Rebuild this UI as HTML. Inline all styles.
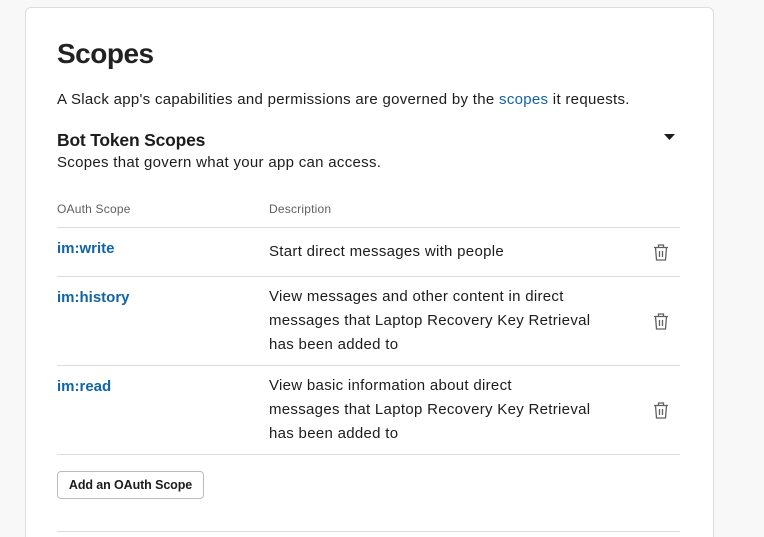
<!DOCTYPE html>
<html><head><style>
html,body{margin:0;width:764px;height:537px;overflow:hidden}
body{background:#f8f8f8;font-family:"Liberation Sans",sans-serif;color:#1d1c1d;position:relative}
.card{position:absolute;left:25px;top:7px;width:687px;height:529px;background:#fff;border:1px solid #ddd;border-bottom:none;border-radius:6px 6px 0 0}
.a{position:absolute;white-space:nowrap}
.line{position:absolute;left:57px;width:623px;height:1px;background:#ddd}
.scope{color:#1264a3;font-weight:bold;font-size:15px}
.desc{font-size:15px;line-height:24px;letter-spacing:0.3px}
.trash{position:absolute;left:653px}
</style></head><body>
<div class="card"></div>
<div class="a" style="left:57px;top:38px;font-size:28px;font-weight:bold;letter-spacing:-0.5px;color:#222">Scopes</div>
<div class="a" style="left:57px;top:91px;font-size:15px;letter-spacing:0.3px">A Slack app's capabilities and permissions are governed by the <span style="color:#1264a3">scopes</span> it requests.</div>
<div class="a" style="left:57px;top:130px;font-size:17.5px;font-weight:bold;letter-spacing:-0.2px">Bot Token Scopes</div>
<div class="a" style="left:57px;top:154px;font-size:15px;letter-spacing:0.3px">Scopes that govern what your app can access.</div>
<svg class="a" style="left:664px;top:134px" width="11" height="7"><path d="M0 0H11L5.5 6Z" fill="#1d1c1d"/></svg>
<div class="a" style="left:57px;top:202px;font-size:12px;color:#616061;letter-spacing:0.2px">OAuth Scope</div>
<div class="a" style="left:269px;top:202px;font-size:12px;color:#616061;letter-spacing:0.2px">Description</div>
<div class="line" style="top:227px"></div>
<div class="a scope" style="left:57px;top:240px">im:write</div>
<div class="a desc" style="left:269px;top:240px">Start direct messages with people</div>
<div class="line" style="top:276px"></div>
<div class="a scope" style="left:57px;top:289px">im:history</div>
<div class="a desc" style="left:269px;top:285px">View messages and other content in direct<br>messages that Laptop Recovery Key Retrieval<br>has been added to</div>
<div class="line" style="top:365px"></div>
<div class="a scope" style="left:57px;top:378px">im:read</div>
<div class="a desc" style="left:269px;top:374px">View basic information about direct<br>messages that Laptop Recovery Key Retrieval<br>has been added to</div>
<div class="line" style="top:454px"></div>
<svg class="trash" style="top:243px" width="16" height="18" viewBox="0 0 16 18" fill="none" stroke="#616061" stroke-width="1.3"><path d="M1 4.5H15M5.5 4.5V2H10.5V4.5M2.5 4.5L3.5 17H12.5L13.5 4.5M6.5 8V14M9.5 8V14"/></svg>
<svg class="trash" style="top:312px" width="16" height="18" viewBox="0 0 16 18" fill="none" stroke="#616061" stroke-width="1.3"><path d="M1 4.5H15M5.5 4.5V2H10.5V4.5M2.5 4.5L3.5 17H12.5L13.5 4.5M6.5 8V14M9.5 8V14"/></svg>
<svg class="trash" style="top:401px" width="16" height="18" viewBox="0 0 16 18" fill="none" stroke="#616061" stroke-width="1.3"><path d="M1 4.5H15M5.5 4.5V2H10.5V4.5M2.5 4.5L3.5 17H12.5L13.5 4.5M6.5 8V14M9.5 8V14"/></svg>
<div class="a" style="left:57px;top:471px;width:145px;height:26px;border:1px solid #bbb;border-radius:4px;font-size:12.5px;font-weight:bold;line-height:26px;text-align:center;letter-spacing:-0.1px">Add an OAuth Scope</div>
<div class="line" style="top:531px"></div>
</body></html>
